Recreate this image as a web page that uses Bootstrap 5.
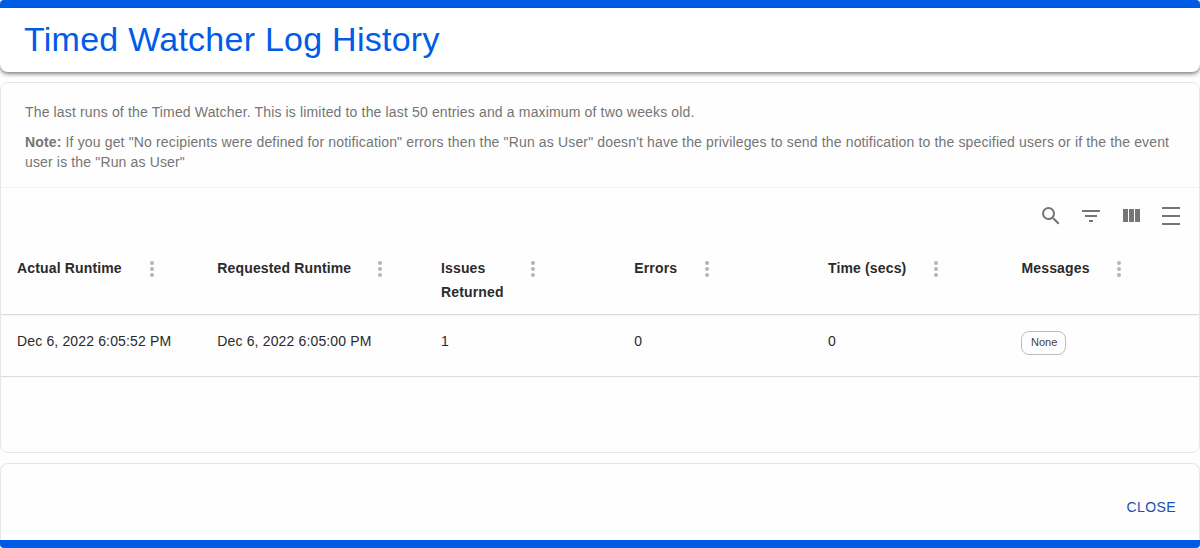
<!DOCTYPE html>
<html lang="en">
<head>
<meta charset="utf-8">
<title>Timed Watcher Log History</title>
<link href="https://cdn.jsdelivr.net/npm/bootstrap@5.3.0/dist/css/bootstrap.min.css" rel="stylesheet">
<style>
html,body{height:548px;overflow:hidden}
body{background:#fefefe;font-family:"Liberation Sans",Arial,sans-serif;color:#212121}
.shell{height:548px;border-top:8px solid #005ce6;border-bottom:8px solid #005ce6;border-radius:4px}
.head-card{height:64px;background:#fff;border-radius:0 0 8px 8px;box-shadow:0 2px 4px rgba(0,0,0,.5);padding:0 24px}
.head-title{font-size:34px;font-weight:400;color:#005ce6;line-height:62px;margin:0;letter-spacing:.25px}
.body-card{margin-top:10px;border:1px solid #e6e6e4;border-radius:8px;background:#fefefe;overflow:hidden;height:372px}
.note-box{height:105px;padding:19px 24px 0;border-bottom:1px solid #f3f3f1;font-size:14px;line-height:20px;color:#757575;letter-spacing:.15px}
.note-box p{margin:0 0 10px}
.tool-row{height:56px;padding:0 8px 0 0}
.tool-btn{width:40px;height:56px;display:flex;align-items:center;justify-content:center;padding:0;border:0;background:none}
.tool-btn svg{display:block}
.log-table{table-layout:fixed;width:100%;margin:0;--bs-table-bg:transparent;--bs-table-color:#212121;font-size:14px;letter-spacing:.15px}
.log-table th{height:71px;padding:12px 16px 0;font-weight:700;line-height:24px;vertical-align:top;border-bottom:1px solid #dcdcdc;box-shadow:0 1px 1px rgba(0,0,0,.03);color:#2b2b2b}
.log-table td{height:62px;padding:0 16px 10px;vertical-align:middle;border-bottom:1px solid #dcdcdc;line-height:24px;color:#2b2b2b}
.th-flex{display:flex;justify-content:space-between;align-items:flex-start}
.th-label{flex:0 0 auto}
.dots{width:4px;flex:none;margin-top:5px;display:flex;flex-direction:column;gap:2px}
.dots i{display:block;width:4px;height:4px;border-radius:50%;background:#b5b5b5}
.pill-none{display:inline-block;height:24px;padding:0 8px 0 8.5px;font-size:11px;letter-spacing:0;line-height:20px;border:1px solid #bdbdbd;border-radius:8px;color:#424242;background:transparent;transform:translateY(1px)}
.foot-card{height:77px;margin-top:10px;border:1px solid #e6e6e4;border-bottom:0;border-radius:8px 8px 0 0;background:#fefefe;padding:0 15px}
.close-btn{padding:6px 8px;font-size:14px;letter-spacing:.4px;color:#1a4fb4;text-transform:uppercase;border:0;background:none;margin-top:27px;line-height:20px}
</style>
</head>
<body>
<div class="shell d-flex flex-column">
  <header class="head-card"><h1 class="head-title">Timed Watcher Log History</h1></header>
  <section class="body-card">
    <div class="note-box">
      <p>The last runs of the Timed Watcher. This is limited to the last 50 entries and a maximum of two weeks old.</p>
      <p><strong>Note:</strong> If you get "No recipients were defined for notification" errors then the "Run as User" doesn't have the privileges to send the notification to the specified users or if the the event user is the "Run as User"</p>
    </div>
    <div class="tool-row d-flex justify-content-end">
      <button class="tool-btn" aria-label="Search"><svg width="24" height="24" viewBox="0 0 24 24" fill="#757575"><path d="M15.5 14h-.79l-.28-.27A6.47 6.47 0 0 0 16 9.5 6.5 6.5 0 1 0 9.5 16c1.61 0 3.09-.59 4.23-1.57l.27.28v.79l5 4.99L20.49 19l-4.99-5zm-6 0C7.01 14 5 11.99 5 9.5S7.01 5 9.5 5 14 7.01 14 9.5 11.99 14 9.5 14z"/></svg></button>
      <button class="tool-btn" aria-label="Filter"><svg width="24" height="24" viewBox="0 0 24 24" fill="#757575"><path d="M10 18h4v-2h-4v2zM3 6v2h18V6H3zm3 7h12v-2H6v2z"/></svg></button>
      <button class="tool-btn" aria-label="Columns"><svg width="24" height="24" viewBox="0 0 24 24" fill="#757575"><path d="M10 18h5V5h-5v13zm-6 0h5V5H4v13zM16 5v13h5V5h-5z"/></svg></button>
      <button class="tool-btn" aria-label="Menu"><svg width="24" height="24" viewBox="0 0 24 24" fill="#757575"><path d="M3 3h18v2H3zM3 11h18v2H3zM3 19h18v2H3z"/></svg></button>
    </div>
    <table class="table log-table">
      <colgroup><col style="width:200.3px"><col style="width:223.7px"><col style="width:193.3px"><col style="width:193.7px"><col style="width:193.5px"><col></colgroup>
      <thead><tr>
        <th><div class="th-flex" style="width:137px"><span class="th-label">Actual Runtime</span><span class="dots"><i></i><i></i><i></i></span></div></th>
        <th><div class="th-flex" style="width:165px"><span class="th-label">Requested Runtime</span><span class="dots"><i></i><i></i><i></i></span></div></th>
        <th><div class="th-flex" style="width:94px"><span class="th-label">Issues<br>Returned</span><span class="dots"><i></i><i></i><i></i></span></div></th>
        <th><div class="th-flex" style="width:75px"><span class="th-label">Errors</span><span class="dots"><i></i><i></i><i></i></span></div></th>
        <th><div class="th-flex" style="width:110px"><span class="th-label">Time (secs)</span><span class="dots"><i></i><i></i><i></i></span></div></th>
        <th><div class="th-flex" style="width:100px"><span class="th-label">Messages</span><span class="dots"><i></i><i></i><i></i></span></div></th>
      </tr></thead>
      <tbody><tr>
        <td>Dec 6, 2022 6:05:52 PM</td><td>Dec 6, 2022 6:05:00 PM</td><td>1</td><td>0</td><td>0</td><td><span class="pill-none">None</span></td>
      </tr></tbody>
    </table>
  </section>
  <footer class="foot-card d-flex justify-content-end align-items-start"><button class="close-btn">Close</button></footer>
</div>
</body>
</html>
